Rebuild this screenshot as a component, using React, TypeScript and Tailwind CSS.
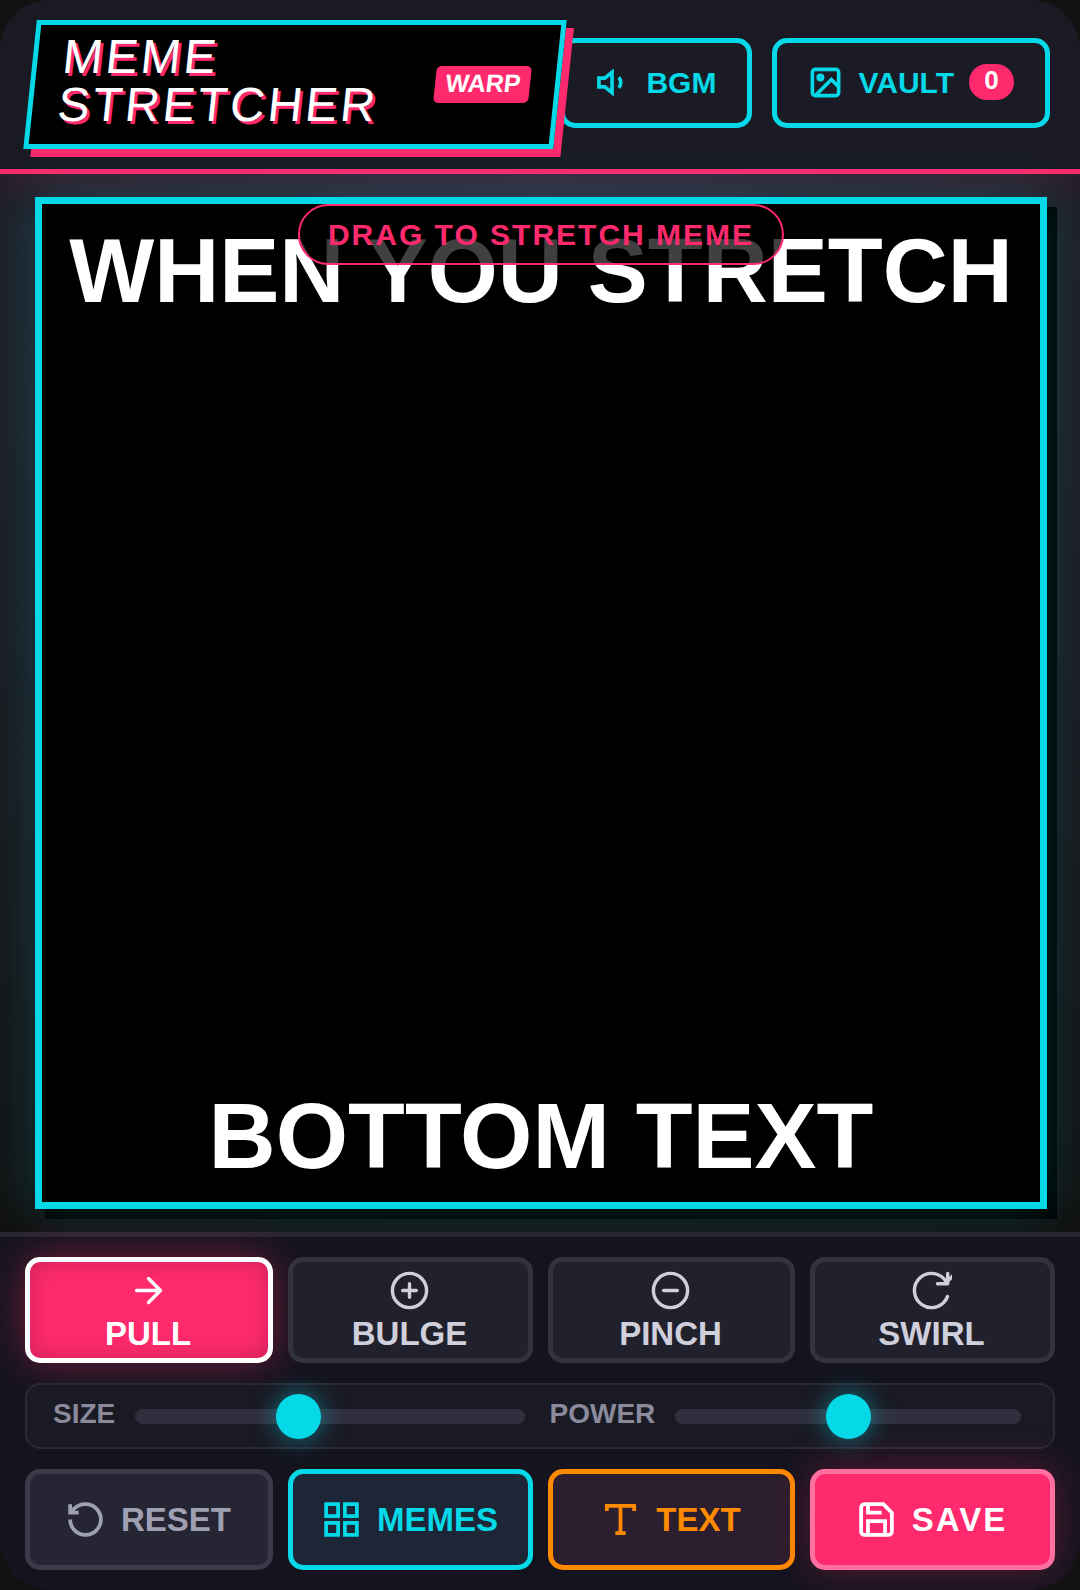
import { useState } from "react";
import type { ReactNode } from "react";

interface IconProps {
  size?: number;
  weight?: number;
  round?: boolean;
  children: ReactNode;
}

function Icon({ size = 41, weight = 2.2, round = false, children }: IconProps) {
  return (
    <svg
      width={size}
      height={size}
      viewBox="0 0 24 24"
      fill="none"
      stroke="currentColor"
      strokeWidth={weight}
      strokeLinecap={round ? "round" : "butt"}
      strokeLinejoin={round ? "round" : "miter"}
      aria-hidden="true"
      className="shrink-0"
    >
      {children}
    </svg>
  );
}

const tools = [
  {
    name: "PULL",
    icon: <path d="M5 12h14M12 5l7 7-7 7" />,
  },
  {
    name: "BULGE",
    icon: (
      <>
        <circle cx="12" cy="12" r="10" />
        <path d="M12 8v8M8 12h8" />
      </>
    ),
  },
  {
    name: "PINCH",
    icon: (
      <>
        <circle cx="12" cy="12" r="10" />
        <path d="M8 12h8" />
      </>
    ),
  },
  {
    name: "SWIRL",
    icon: (
      <path d="M21.5 2v6h-6M21.34 15.57a10 10 0 1 1-.57-8.38l5.67-5.67" />
    ),
  },
];

const columns = "grid grid-cols-[248fr_245fr_247fr_245fr] gap-[15px]";
const headerButton =
  "flex h-[90px] items-center gap-[15px] rounded-[15px] border-5 border-[#05d9e8] bg-[#1a1b25] px-[31px] pb-[2px] text-[30px] font-bold text-[#05d9e8]";
const actionButton =
  "flex h-[101px] items-center justify-center gap-[15px] rounded-[15px] border-5 pr-[2px] text-[33px] font-bold";

function Header() {
  return (
    <header className="relative flex items-center border-b-5 border-[#ff2a6d] bg-[#1a1a24] px-[30px] py-5 shadow-[0_5px_40px_rgba(255,42,109,0.15)]">
      <div className="z-10 flex flex-1 -skew-x-6 items-center justify-between border-5 border-[#05d9e8] bg-black px-[25px] shadow-[8px_8px_0_#ff2a6d]">
        <h1 className="pt-2 pb-[15px] text-[48px] leading-[48px] tracking-[3px] text-white [text-shadow:3px_3px_0_#ff2a6d]">
          MEME
          <br />
          STRETCHER
        </h1>
        <span className="rounded-[5px] bg-[#ff2a6d] px-[10px] pt-[3px] pb-[6px] text-[25px] leading-7 font-bold text-white">
          WARP
        </span>
      </div>
      <div className="flex gap-5 pb-[3px]">
        <button type="button" className={headerButton}>
          <Icon size={35} weight={2.5}>
            <path d="M11 5 6 9H2v6h4l5 4V5z" />
            <path d="M15.54 8.46a5 5 0 0 1 0 7.07" />
          </Icon>
          BGM
        </button>
        <button type="button" className={headerButton}>
          <Icon size={35} weight={2.5}>
            <rect x="3" y="3" width="18" height="18" rx="2" />
            <circle cx="8.5" cy="8.5" r="1.5" />
            <path d="m21 15-5-5L5 21" />
          </Icon>
          VAULT
          <span className="h-9 w-[45px] rounded-full bg-[#ff2a6d] text-center text-[26px] leading-8 text-white">
            0
          </span>
        </button>
      </div>
    </header>
  );
}

function Stage() {
  return (
    <main className="bg-[radial-gradient(circle_at_top,#2a2a3a_0%,#111111_100%)] py-[23px] pr-[33px] pl-[35px]">
      <div className="relative flex aspect-square flex-col items-center justify-between border-7 border-[#05d9e8] bg-black pt-[17px] pb-4 font-bold whitespace-nowrap text-white shadow-[0_0_50px_rgba(5,217,232,0.2),10px_10px_0_#000]">
        <p className="text-[90px] leading-[100px]">WHEN YOU STRETCH</p>
        <p className="text-[93px] leading-[100px]">BOTTOM TEXT</p>
        <div className="absolute top-0 left-1/2 flex h-[61px] -translate-x-1/2 items-center rounded-full border-2 border-[#ff2a6d] bg-black/75 px-7 text-[30px] tracking-[2px] text-[#ff2a6d]">
          DRAG TO STRETCH MEME
        </div>
      </div>
    </main>
  );
}

interface SliderProps {
  label: string;
  value: number;
  onChange: (value: number) => void;
}

function Slider({ label, value, onChange }: SliderProps) {
  return (
    <label className="flex items-center gap-5 text-[28px] leading-8 font-bold text-[#8a8a9c]">
      <span className="pb-1">{label}</span>
      <input
        type="range"
        min={0}
        max={100}
        value={value}
        onChange={(e) => onChange(Number(e.target.value))}
        className="h-[15px] min-w-0 flex-1 appearance-none rounded-full bg-[#302f3e] [&::-webkit-slider-thumb]:size-[45px] [&::-webkit-slider-thumb]:appearance-none [&::-webkit-slider-thumb]:rounded-full [&::-webkit-slider-thumb]:bg-[#05d9e8] [&::-webkit-slider-thumb]:shadow-[0_0_25px_rgba(5,217,232,0.5)]"
      />
    </label>
  );
}

export default function App() {
  const [tool, setTool] = useState("PULL");
  const [size, setSize] = useState(41);
  const [power, setPower] = useState(50);

  return (
    <div className="bg-[#121212] font-['Liberation_Sans',Arial,sans-serif]">
      <div className="overflow-hidden rounded-[50px] bg-[#14141e]">
        <Header />
        <Stage />
        <footer className="relative flex flex-col gap-5 border-t-5 border-[#272733] bg-[#14141e] px-[25px] py-5">
          <div className={columns}>
            {tools.map((t) => (
              <button
                key={t.name}
                type="button"
                aria-pressed={tool === t.name}
                onClick={() => setTool(t.name)}
                className={`flex h-[106px] flex-col items-center justify-center gap-2 rounded-[15px] border-5 pr-[2px] pb-[2px] text-[33px] leading-[30px] font-bold ${
                  tool === t.name
                    ? "border-white bg-[#ff2a6d] text-white shadow-[0_0_40px_rgba(255,42,109,0.4),inset_0_0_25px_rgba(0,0,0,0.2)]"
                    : "border-[#333340] bg-[#21212d] text-[#d0d0dc]"
                }`}
              >
                <Icon weight={2} round>
                  {t.icon}
                </Icon>
                {t.name}
              </button>
            ))}
          </div>

          <div className="grid h-[66px] grid-cols-2 gap-[25px] rounded-[15px] border-2 border-[#2a2a37] bg-[#1a1a24] pr-8 pl-[26px]">
            <Slider label="SIZE" value={size} onChange={setSize} />
            <Slider label="POWER" value={power} onChange={setPower} />
          </div>

          <div className={columns}>
            <button
              type="button"
              className={`${actionButton} border-[#3a3a4a] bg-[#252533] text-[#a0a0b4]`}
            >
              <Icon>
                <path d="M3 12a9 9 0 1 0 9-9 9.75 9.75 0 0 0-6.74 2.74L3 8" />
                <path d="M3 3v5h5" />
              </Icon>
              RESET
            </button>
            <button
              type="button"
              className={`${actionButton} border-[#05d9e8] bg-[#1c2636] text-[#05d9e8]`}
            >
              <Icon>
                <rect x="3" y="3" width="7" height="7" />
                <rect x="14" y="3" width="7" height="7" />
                <rect x="14" y="14" width="7" height="7" />
                <rect x="3" y="14" width="7" height="7" />
              </Icon>
              MEMES
            </button>
            <button
              type="button"
              className={`${actionButton} border-[#ff8a00] bg-[#2b1e2e] text-[#ff8a00]`}
            >
              <Icon>
                <path d="M4 7V4h16v3M9 20h6M12 4v16" />
              </Icon>
              TEXT
            </button>
            <button
              type="button"
              className={`${actionButton} border-[#ff70a0] bg-[#ff2a6d] tracking-[2px] text-white shadow-[0_0_40px_rgba(255,42,109,0.3)]`}
            >
              <Icon>
                <path d="M19 21H5a2 2 0 0 1-2-2V5a2 2 0 0 1 2-2h11l5 5v11a2 2 0 0 1-2 2z" />
                <path d="M17 21v-8H7v8M7 3v5h8" />
              </Icon>
              SAVE
            </button>
          </div>
        </footer>
      </div>
    </div>
  );
}
